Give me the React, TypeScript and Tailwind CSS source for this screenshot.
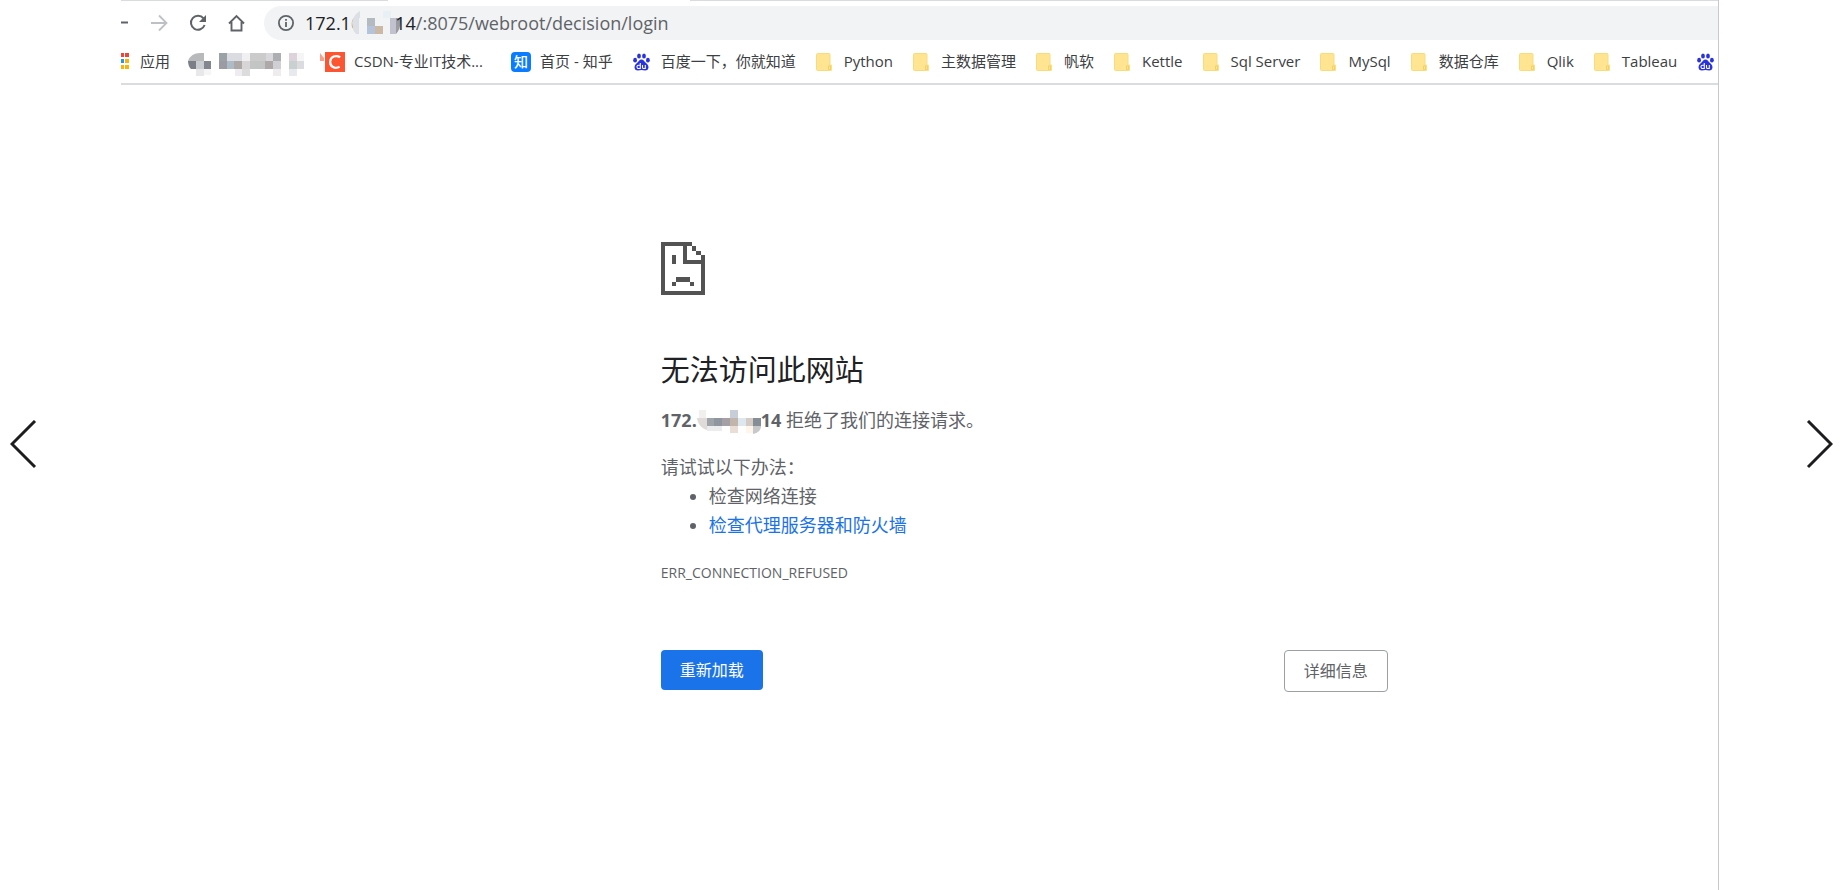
import React from 'react';

type IconKind = 'csdn' | 'zhihu' | 'baidu' | 'folder';

interface Bookmark {
  icon: IconKind;
  label: string;
}

const bookmarks: Bookmark[] = [
  { icon: 'csdn', label: 'CSDN-专业IT技术...' },
  { icon: 'zhihu', label: '首页 - 知乎' },
  { icon: 'baidu', label: '百度一下，你就知道' },
  { icon: 'folder', label: 'Python' },
  { icon: 'folder', label: '主数据管理' },
  { icon: 'folder', label: '帆软' },
  { icon: 'folder', label: 'Kettle' },
  { icon: 'folder', label: 'Sql Server' },
  { icon: 'folder', label: 'MySql' },
  { icon: 'folder', label: '数据仓库' },
  { icon: 'folder', label: 'Qlik' },
  { icon: 'folder', label: 'Tableau' },
  { icon: 'baidu', label: '' },
];

const itemClass: Record<IconKind, string> = {
  csdn: 'min-w-[166px] gap-[9px]',
  zhihu: 'gap-[9px]',
  baidu: 'gap-[11px]',
  folder: 'gap-[11px]',
};

const FolderIcon = () => (
  <svg width="17" height="20" viewBox="0 0 17 20" className="shrink-0">
    <rect x="0.5" y="1.5" width="13.5" height="17" rx="1" fill="#ffe591" stroke="#f8dc7c" />
    <path d="M12.5 12.5h2.5a1 1 0 0 1 1 1V18a1 1 0 0 1-1 1h-2.5z" fill="#fbdf80" />
    <path d="M12.5 17.5v-3.5h2v3.5z" fill="#ffe591" stroke="#f0cd5f" strokeWidth="0.8" />
  </svg>
);

const BaiduIcon = () => (
  <svg width="17" height="18" viewBox="0 0 17 18" className="shrink-0" fill="#2932e1">
    <ellipse cx="2.1" cy="7.2" rx="1.9" ry="2.4" />
    <ellipse cx="6" cy="3" rx="1.9" ry="2.6" />
    <ellipse cx="11" cy="3" rx="1.9" ry="2.6" />
    <ellipse cx="14.9" cy="7.2" rx="1.9" ry="2.4" />
    <path d="M8.5 6.6c2 0 2.6 1.7 4 3s3 2.4 3 4.6c0 2-1.3 3.3-3.4 3.3-1.4 0-2.3-.4-3.6-.4s-2.2.4-3.6.4c-2.1 0-3.4-1.3-3.4-3.3 0-2.2 1.6-3.3 3-4.6s2-3 4-3z" />
    <path
      d="M7.3 10v5.5H5.6a1.6 1.6 0 0 1 0-3.3h1.7M9.5 12v2.2c0 .9.4 1.300 1.200 1.300h1.600V12"
      fill="none"
      stroke="#fff"
      strokeWidth="1.1"
    />
  </svg>
);

const BookmarkIcon: React.FC<{ kind: IconKind }> = ({ kind }) => {
  if (kind === 'csdn') {
    return (
      <svg width="20" height="20" viewBox="0 0 20 20" className="shrink-0">
        <rect width="20" height="20" fill="#fc5531" />
        <path d="M15.2 5.2c-4.600-2.600-9.600-.4-10 4.300-.4 5.200 4.600 7.800 9.400 5.300" fill="none" stroke="#fff" strokeWidth="2.2" />
      </svg>
    );
  }
  if (kind === 'zhihu') {
    return (
      <span className="flex h-5 w-5 shrink-0 items-center justify-center rounded bg-[#0a7cff] text-sm font-medium text-white">
        知
      </span>
    );
  }
  return kind === 'baidu' ? <BaiduIcon /> : <FolderIcon />;
};

const NavIcons = () => (
  <div className="flex h-5 shrink-0 items-center">
    <button aria-label="Back" className="w-[30px]">
      <svg width="7" height="20" viewBox="0 0 7 20">
        <path d="M0 9.5h7" stroke="#5f6368" strokeWidth="2" />
      </svg>
    </button>
    <button aria-label="Forward" className="w-[38px]">
      <svg width="17" height="20" viewBox="0 0 17 20" fill="none" stroke="#bdc1c6" strokeWidth="1.8">
        <path d="M0 10h15M8 2.5l7.5 7.5L8 17.5" />
      </svg>
    </button>
    <button aria-label="Reload" className="w-[39px]">
      <svg width="18" height="20" viewBox="0 0 18 20">
        <path d="M14.5 5.4A7 7 0 1 0 15.6 12" fill="none" stroke="#5f6368" strokeWidth="2" />
        <path d="M17 2v7h-7z" fill="#5f6368" />
      </svg>
    </button>
    <button aria-label="Home" className="w-[36px]">
      <svg width="17" height="20" viewBox="0 0 17 20" fill="none" stroke="#5f6368" strokeWidth="1.9">
        <path d="M1 10.5L8.5 3l7.5 7.5M3.5 9v8.5h10V9" />
      </svg>
    </button>
  </div>
);

const InfoIcon = () => (
  <svg width="16" height="16" viewBox="0 0 16 16" className="mr-[11px] shrink-0" fill="#5f6368">
    <circle cx="8" cy="8" r="7.1" fill="none" stroke="#5f6368" strokeWidth="1.8" />
    <path d="M7.1 7h1.8v5H7.1zM7.1 4h1.8v1.8H7.1z" />
  </svg>
);

// Pixelated blocks that cover part of the host name and one bookmark
const UrlMask = () => (
  <svg width="50" height="24" viewBox="0 0 50 24" className="-mr-1.5 -ml-2.5 shrink-0">
    <path d="M9 0v23H5C2 20 1 16 1 12S4 3 9 0z" fill="#dcdfe4" />
    <rect x="8" y="7" width="8" height="16" fill="#f1f3f4" />
    <rect x="16" y="7" width="8" height="8" fill="#b5bac1" />
    <rect x="16" y="15" width="8" height="8" fill="#b4c3da" />
    <rect x="24" y="15" width="8" height="8" fill="#cbb9a6" />
    <rect x="32" y="0" width="8" height="7" fill="#e9f0f5" />
    <rect x="39" y="7" width="6" height="16" fill="#c1c2cd" />
    <path d="M45 7h5v3c-1 6-2 10-5 13z" fill="#9a9ca4" />
  </svg>
);

const BookmarkMask = () => (
  <svg width="115" height="28" viewBox="2 0 115 28" className="shrink-0 overflow-visible">
    <path d="M0 13Q3 5 12 5h4v8z" fill="#b8b9bb" />
    <path d="M0 13h8v8H3Q0 18 0 13z" fill="#7c7f88" />
    <rect x="8" y="13" width="8" height="8" fill="#c9cdd2" />
    <rect x="16" y="13" width="7" height="8" fill="#84868f" />
    <rect x="8" y="21" width="8" height="7" fill="#e8e8ea" />
    <rect x="16" y="21" width="7" height="6" fill="#f5f5f6" />
    <rect x="31" y="5" width="8" height="8" fill="#9aa2a6" />
    <rect x="39" y="5" width="15" height="8" fill="#dadce2" />
    <rect x="54" y="5" width="8" height="8" fill="#f0f0f2" />
    <rect x="62" y="5" width="16" height="8" fill="#cbcbcb" />
    <rect x="78" y="5" width="7" height="8" fill="#d8d8dc" />
    <rect x="85" y="5" width="8" height="8" fill="#acaeb2" />
    <rect x="31" y="13" width="8" height="8" fill="#9c9aa2" />
    <rect x="39" y="13" width="7" height="8" fill="#aebbc6" />
    <rect x="46" y="13" width="8" height="8" fill="#aca8a6" />
    <rect x="54" y="13" width="8" height="8" fill="#d8d5d7" />
    <rect x="62" y="13" width="15" height="8" fill="#c2c5c4" />
    <rect x="77" y="13" width="8" height="8" fill="#afa8a8" />
    <rect x="85" y="13" width="8" height="8" fill="#d0d0d4" />
    <rect x="47" y="21" width="7" height="7" fill="#eeecf0" />
    <rect x="54" y="21" width="8" height="7" fill="#dcdcdc" />
    <rect x="85" y="21" width="8" height="7" fill="#eeecef" />
    <rect x="101" y="5" width="8" height="8" fill="#dcd4da" />
    <rect x="109" y="5" width="7" height="8" fill="#f5f5f6" />
    <rect x="101" y="13" width="8" height="8" fill="#c9d0d0" />
    <rect x="109" y="13" width="7" height="8" fill="#dcdce0" />
    <rect x="101" y="21" width="8" height="7" fill="#e8e8ef" />
    <path d="M132 5l4 5v3h-4z" fill="#f9a08d" />
  </svg>
);

const HostMask = () => (
  <svg width="64" height="24" viewBox="0 0 64 24" className="inline-block align-middle">
    <rect x="2" y="0" width="7" height="8" fill="#f1f0ef" />
    <path d="M0 8h10v12C4 18 1 14 0 8z" fill="#dedbd8" />
    <rect x="10" y="8" width="7" height="8" fill="#9fa3aa" />
    <rect x="17" y="8" width="8" height="8" fill="#9096a0" />
    <rect x="25" y="8" width="8" height="8" fill="#a5a0a5" />
    <rect x="33" y="0" width="8" height="8" fill="#c8ced8" />
    <rect x="33" y="8" width="8" height="8" fill="#c1b5ac" />
    <rect x="41" y="8" width="8" height="8" fill="#dce7ef" />
    <rect x="49" y="8" width="7" height="8" fill="#d5cbc5" />
    <rect x="56" y="8" width="8" height="8" fill="#858d96" />
    <rect x="10" y="16" width="15" height="5" fill="#ececef" />
    <rect x="33" y="16" width="8" height="7" fill="#e9ded6" />
    <rect x="49" y="16" width="7" height="7" fill="#fff5eb" />
    <path d="M56 16h8c0 4-3 7-8 8z" fill="#c6c8ca" />
  </svg>
);

const AppsIcon = () => (
  <svg width="8" height="17" viewBox="0 0 8 17" className="shrink-0">
    <path d="M0 0h3v4H0zM4 0h4v4H4z" fill="#f44336" />
    <path d="M0 6h3v4H0z" fill="#2196f3" />
    <path d="M4 6h4v4H4zM0 12h3v4H0zM4 12h4v4H4z" fill="#ffb300" />
  </svg>
);

const SadPage = () => (
  <svg width="44" height="53" viewBox="0 0 20 24" preserveAspectRatio="none" fill="#535353" shapeRendering="crispEdges">
    <path d="M0 0h14v2H2v20h16V10h-8V2h2v6h6V6h2v18H0z" />
    <path d="M14 2h2v2h-2zM16 4h2v2h-2zM5 6h2v4H5zM7 16h6v2H7zM5 18h2v2H5zM13 18h2v2h-2z" />
  </svg>
);

export default function App() {
  return (
    <div className="flex min-h-screen bg-white font-['Open_Sans','Noto_Sans_CJK_SC',sans-serif] text-[#5f6368]">
      <div className="flex w-[121px] shrink-0 items-center pl-[10px]">
        <button aria-label="Previous">
          <svg width="27" height="50" viewBox="0 0 27 50" fill="none" stroke="#1d1d1f" strokeWidth="3">
            <path d="M25 1L2 24l23 23" />
          </svg>
        </button>
      </div>

      <div className="flex min-w-0 flex-1 flex-col overflow-hidden border-r border-[#c8c9cc]">
        {/* Bottom edge of the tab strip, open under the active tab */}
        <div className="flex h-[6px] shrink-0">
          <div className="h-px w-[267px] bg-[#dadbe0]" />
          <div className="w-[302px]" />
          <div className="h-px flex-1 bg-[#dadbe0]" />
        </div>

        {/* Toolbar */}
        <div className="flex items-center">
          <NavIcons />
          <div className="flex h-[34px] flex-1 items-center rounded-l-full bg-[#f1f3f4] pl-[14px] text-lg">
            <InfoIcon />
            <span className="text-[#202124]">172.16</span>
            <UrlMask />
            <span className="text-[#202124]">14</span>
            <span>/:8075/webroot/decision/login</span>
          </div>
        </div>

        {/* Bookmarks bar */}
        <nav className="flex h-[45px] shrink-0 items-center gap-5 border-b-2 border-[#dadce0] text-[15px] whitespace-nowrap text-[#3c4043]">
          <a href="#" className="flex shrink-0 items-center gap-[11px]">
            <AppsIcon />
            应用
          </a>
          <BookmarkMask />
          {bookmarks.map((b, i) => (
            <a
              key={i}
              href="#"
              aria-label={b.label || '百度'}
              className={`flex shrink-0 items-center ${itemClass[b.icon]}`}
            >
              <BookmarkIcon kind={b.icon} />
              {b.label}
            </a>
          ))}
        </nav>

        <main className="ml-[33.8%] w-[727px] pt-[157px] text-lg leading-[29px]">
          <SadPage />
          <h1 className="mt-[55px] text-[29px] leading-[40px] text-[#202124]">无法访问此网站</h1>
          <p className="mt-4">
            <strong className="font-bold">172.</strong>
            <HostMask />
            <strong className="font-bold">14</strong> 拒绝了我们的连接请求。
          </p>
          <p className="mt-[18px]">请试试以下办法：</p>
          <ul className="list-disc pl-12">
            <li>检查网络连接</li>
            <li>
              <a href="#" className="text-[#1a73e8]">检查代理服务器和防火墙</a>
            </li>
          </ul>
          <p className="mt-[18px] text-sm leading-[29px]">ERR_CONNECTION_REFUSED</p>
          <div className="mt-[63px] flex items-start justify-between text-base">
            <button className="h-10 rounded bg-[#1a73e8] px-[19px] text-white">重新加载</button>
            <button className="h-[42px] rounded border border-[#9aa0a6] px-[19px]">详细信息</button>
          </div>
        </main>
      </div>

      <div className="flex w-[121px] shrink-0 items-center justify-end pr-[7px]">
        <button aria-label="Next">
          <svg width="27" height="50" viewBox="0 0 27 50" fill="none" stroke="#1d1d1f" strokeWidth="3">
            <path d="M2 1l23 23L2 47" />
          </svg>
        </button>
      </div>
    </div>
  );
}
